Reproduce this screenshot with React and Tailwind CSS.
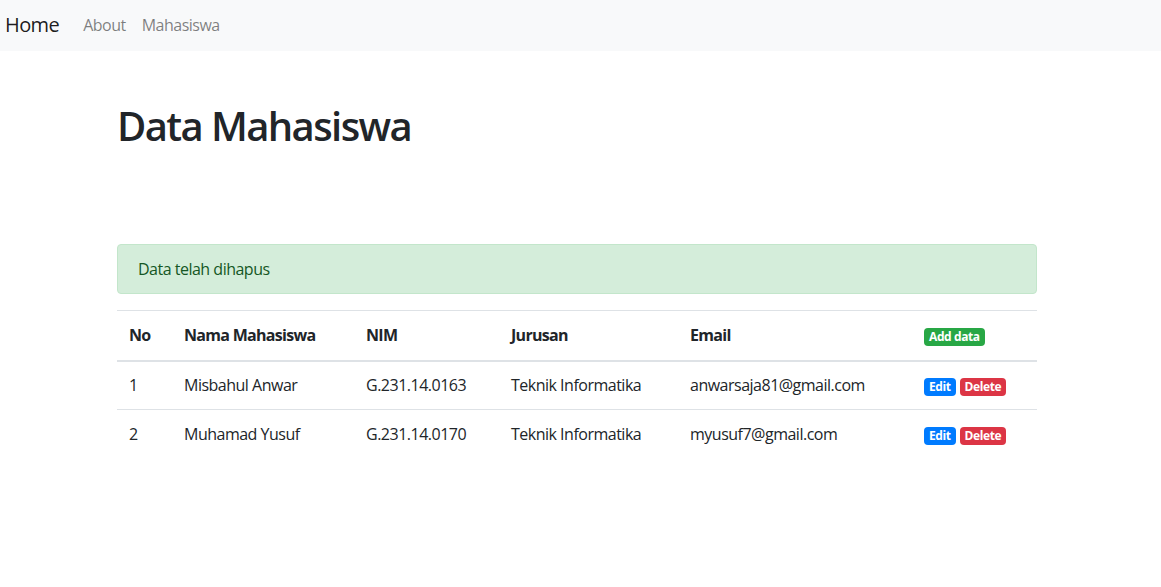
export default function App() {
  const rows = [
    { no: 1, nama: "Misbahul Anwar", nim: "G.231.14.0163", jurusan: "Teknik Informatika", email: "anwarsaja81@gmail.com" },
    { no: 2, nama: "Muhamad Yusuf", nim: "G.231.14.0170", jurusan: "Teknik Informatika", email: "myusuf7@gmail.com" },
  ];
  const font = { fontFamily: '"Open Sans", "Noto Sans", sans-serif' };
  const badge = "inline-block text-white text-[12px] font-bold leading-none px-[5px] py-[3px] rounded-[4px] tracking-[-0.4px]";
  return (
    <div className="min-h-[587px] bg-white text-[#212529] text-[16px] leading-[1.5] tracking-[-0.5px]" style={font}>
      <nav className="h-[51px] bg-[#f8f9fa] flex items-center pl-[5px] pb-[2px]">
        <a className="text-[20px] text-[rgba(0,0,0,0.9)] mr-[16px] tracking-[-0.6px]">Home</a>
        <a className="px-[8px] text-[rgba(0,0,0,0.5)]">About</a>
        <a className="px-[8px] text-[rgba(0,0,0,0.5)]">Mahasiswa</a>
      </nav>
      <div className="ml-[117px] w-[920px]">
        <h1 className="mt-[51px] text-[40px] font-semibold leading-[1.2] tracking-[-1.6px]">Data Mahasiswa</h1>
        <div className="mt-[94px] h-[50px] bg-[#d4edda] border border-[#c3e6cb] text-[#155724] rounded-[4px] px-[20px] flex items-center">
          Data telah dihapus
        </div>
        <table className="mt-[16px] w-full border-collapse">
          <thead>
            <tr className="border-t border-[#dee2e6] border-b-2 tracking-[-0.7px]">
              <th className="text-left font-bold px-[12px] h-[50px] w-[55px]">No</th>
              <th className="text-left font-bold px-[12px] w-[182px]">Nama Mahasiswa</th>
              <th className="text-left font-bold px-[12px] w-[145px]">NIM</th>
              <th className="text-left font-bold px-[12px] w-[179px]">Jurusan</th>
              <th className="text-left font-bold px-[12px] w-[234px]">Email</th>
              <th className="text-left px-[12px]">
                <span className={badge + " bg-[#28a745]"}>Add data</span>
              </th>
            </tr>
          </thead>
          <tbody>
            {rows.map((r) => (
              <tr key={r.no} className="border-t border-[#dee2e6]">
                <td className="px-[12px] h-[49px]">{r.no}</td>
                <td className="px-[12px]">{r.nama}</td>
                <td className="px-[12px]">{r.nim}</td>
                <td className="px-[12px]">{r.jurusan}</td>
                <td className="px-[12px]">{r.email}</td>
                <td className="px-[12px]">
                  <span className={badge + " bg-[#007bff]"}>Edit</span>
                  <span className={badge + " ml-[4px] bg-[#dc3545]"}>Delete</span>
                </td>
              </tr>
            ))}
          </tbody>
        </table>
      </div>
    </div>
  );
}
